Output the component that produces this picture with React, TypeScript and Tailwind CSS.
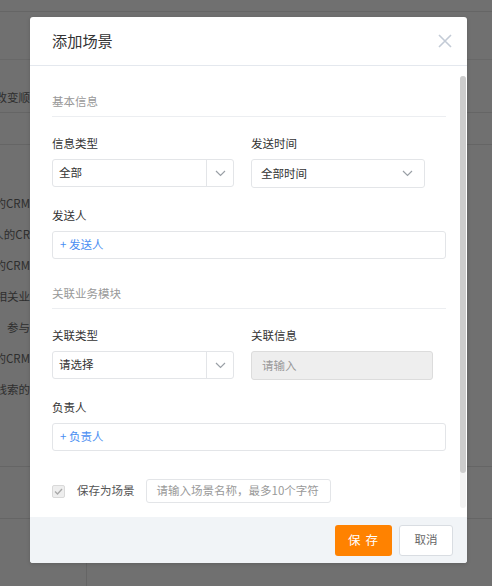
import React from 'react';

const Chevron: React.FC = () => (
  <svg width="11" height="7" viewBox="0 0 11 7" fill="none">
    <polyline points="1,1 5.5,5.5 10,1" stroke="#9aa0a6" strokeWidth="1.2" />
  </svg>
);

const Label: React.FC<{ children: React.ReactNode }> = ({ children }) => (
  <div className="text-[11.5px] leading-[20px] text-[#333] mb-[6px]">{children}</div>
);

const SectionTitle: React.FC<{ children: React.ReactNode }> = ({ children }) => (
  <div className="text-[11.5px] leading-[20px] text-[#999] pb-[5px] border-b border-[#eceef1]">{children}</div>
);

const bgLines = ['我的CRM', '负责人的CR', '我的CRM', '相关业', '参与', '我的CRM', '线索的'];

const App: React.FC = () => {
  return (
    <div className="relative w-[492px] h-[586px] overflow-hidden bg-[#707070] font-['Noto_Sans_CJK_SC','Noto_Sans',sans-serif]">
      {/* page behind the mask */}
      <div className="h-[12px] border-b border-[#656565]" />
      <div className="h-[48px] border-b border-[#686868]" />
      <div className="h-[53px] border-b border-[#656565] pt-[27px]">
        <div className="w-[30px] overflow-hidden flex flex-col items-end">
          <span className="whitespace-nowrap text-[11.5px] leading-[20px] text-[#2e2e2e]">修改变顺</span>
        </div>
      </div>
      <div className="h-[32px] border-b border-[#656565]" />
      <div className="pt-[43px] w-[30px] overflow-hidden flex flex-col items-end">
        {bgLines.map((t, i) => (
          <span key={i} className="whitespace-nowrap text-[11.5px] leading-[31px] text-[#2e2e2e]">
            {t}
          </span>
        ))}
      </div>
      <div className="mt-[61px] h-[53px] border-t border-b border-[#656565]" />
      <div className="flex h-[70px]">
        <div className="w-[87px] border-r border-[#656565]" />
      </div>

      {/* dialog */}
      <div className="absolute left-[30px] top-[17px] w-[437px] h-[546px] bg-white rounded-[3px] flex flex-col overflow-hidden shadow-[0_1px_4px_rgba(0,0,0,0.15)]">
        <div className="h-[49px] shrink-0 flex items-center justify-between pl-[22px] pr-[15px] border-b border-[#e4e8ee]">
          <h2 className="text-[15.2px] text-[#333] leading-none">添加场景</h2>
          <svg width="14" height="14" viewBox="0 0 14 14" fill="none">
            <path d="M1 1L13 13M13 1L1 13" stroke="#c3cbd6" strokeWidth="1.6" />
          </svg>
        </div>

        <div className="relative flex-1 overflow-hidden">
          <div className="pl-[22px] pr-[21px] pt-[25px]">
            <SectionTitle>基本信息</SectionTitle>

            <div className="mt-[16px] grid grid-cols-[182px_182px] gap-x-[17px]">
              <div>
                <Label>信息类型</Label>
                <div className="h-[28px] flex border border-[#e3e5e8] rounded-[3px] text-[11.5px] text-[#333]">
                  <div className="flex-1 flex items-center pl-[6px]">全部</div>
                  <div className="w-[27px] border-l border-[#e3e5e8] flex items-center justify-center">
                    <Chevron />
                  </div>
                </div>
              </div>
              <div>
                <Label>发送时间</Label>
                <div className="w-[174px] h-[29px] flex items-center justify-between border border-[#e3e5e8] rounded-[3px] pl-[9px] pr-[11px] text-[11.5px] text-[#333]">
                  <span>全部时间</span>
                  <Chevron />
                </div>
              </div>
            </div>

            <div className="mt-[17px]">
              <Label>发送人</Label>
              <div className="h-[28px] flex items-center border border-[#e3e5e8] rounded-[3px] pl-[7px] text-[11.5px] text-[#4a8ef2]">
                + 发送人
              </div>
            </div>

            <div className="mt-[24px]">
              <SectionTitle>关联业务模块</SectionTitle>
            </div>

            <div className="mt-[16px] grid grid-cols-[182px_182px] gap-x-[17px]">
              <div>
                <Label>关联类型</Label>
                <div className="h-[28px] flex border border-[#e3e5e8] rounded-[3px] text-[11.5px] text-[#333]">
                  <div className="flex-1 flex items-center pl-[6px]">请选择</div>
                  <div className="w-[27px] border-l border-[#e3e5e8] flex items-center justify-center">
                    <Chevron />
                  </div>
                </div>
              </div>
              <div>
                <Label>关联信息</Label>
                <div className="h-[29px] flex items-center border border-[#dcdcdc] rounded-[3px] bg-[#eeeeee] pl-[10px] text-[11.5px] text-[#999]">
                  请输入
                </div>
              </div>
            </div>

            <div className="mt-[17px]">
              <Label>负责人</Label>
              <div className="h-[28px] flex items-center border border-[#e3e5e8] rounded-[3px] pl-[7px] text-[11.5px] text-[#4a8ef2]">
                + 负责人
              </div>
            </div>

            <div className="mt-[28px] flex items-center">
              <div className="w-[13px] h-[13px] border border-[#d9d9d9] rounded-[2px] bg-[#eeeeee] flex items-center justify-center">
                <svg width="9" height="7" viewBox="0 0 9 7" fill="none">
                  <polyline points="1,3.5 3.5,6 8,1" stroke="#a9a9a9" strokeWidth="1.3" />
                </svg>
              </div>
              <span className="ml-[12px] text-[11.5px] text-[#555]">保存为场景</span>
              <div className="ml-[11px] w-[185px] h-[24px] flex items-center border border-[#e3e5e8] rounded-[3px] pl-[10px] text-[11.5px] text-[#999] whitespace-nowrap">
                请输入场景名称，最多10个字符
              </div>
            </div>
          </div>

          {/* scrollbar */}
          <div className="absolute right-[1px] top-[10px] w-[6px] h-[432px] rounded-[3px] bg-[#f3f3f3]">
            <div className="w-full h-[397px] rounded-[3px] bg-[#cdcdcd]" />
          </div>
        </div>

        <div className="h-[46px] shrink-0 bg-[#f1f4f7] flex items-center justify-end gap-[7px] pr-[14px]">
          <button className="w-[57px] h-[31px] rounded-[3px] bg-[#ff8200] text-white text-[12.5px] tracking-[1px]">
            保 存
          </button>
          <button className="w-[54px] h-[31px] rounded-[3px] bg-white border border-[#d9dde2] text-[#666] text-[11.5px]">
            取消
          </button>
        </div>
      </div>
    </div>
  );
};

export default App;
